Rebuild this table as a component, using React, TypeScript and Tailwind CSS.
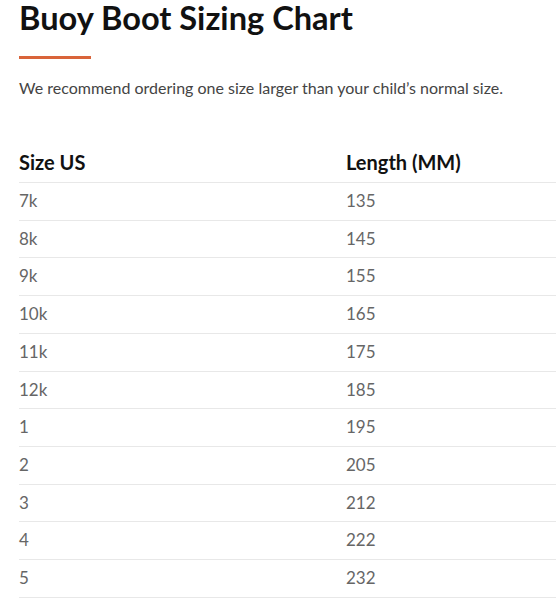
const rows: [string, string][] = [
	["7k", "135"],
	["8k", "145"],
	["9k", "155"],
	["10k", "165"],
	["11k", "175"],
	["12k", "185"],
	["1", "195"],
	["2", "205"],
	["3", "212"],
	["4", "222"],
	["5", "232"],
];

export default function App() {
	return (
		<div className="min-h-[600px] bg-white pl-[19px] font-['Lato','Liberation_Sans',sans-serif]">
			<h1 className="pt-[1px] text-[32.6px] font-bold leading-[34px] text-[#111]">Buoy Boot Sizing Chart</h1>
			<div className="mt-[21px] h-[3px] w-[72px] bg-[#d9643a]" />
			<p className="mt-[17px] text-[16px] leading-[24px] text-[#444]">
				We recommend ordering one size larger than your child’s normal size.
			</p>
			<table className="mt-[50px] w-full border-collapse text-left">
				<thead>
					<tr className="border-b border-[#e8e8e8]">
						<th className="w-[327px] pb-[8px] text-[20px] font-bold leading-[24px] text-[#111]">Size US</th>
						<th className="pb-[8px] text-[20px] font-bold leading-[24px] text-[#111]">Length (MM)</th>
					</tr>
				</thead>
				<tbody>
					{rows.map(([size, len]) => (
						<tr key={size} className="border-b border-[#e8e8e8]">
							<td className="pt-[8px] pb-[8px] text-[17px] leading-[20.7px] text-[#666]">{size}</td>
							<td className="pt-[8px] pb-[8px] text-[17px] leading-[20.7px] text-[#666]">{len}</td>
						</tr>
					))}
				</tbody>
			</table>
		</div>
	);
}
